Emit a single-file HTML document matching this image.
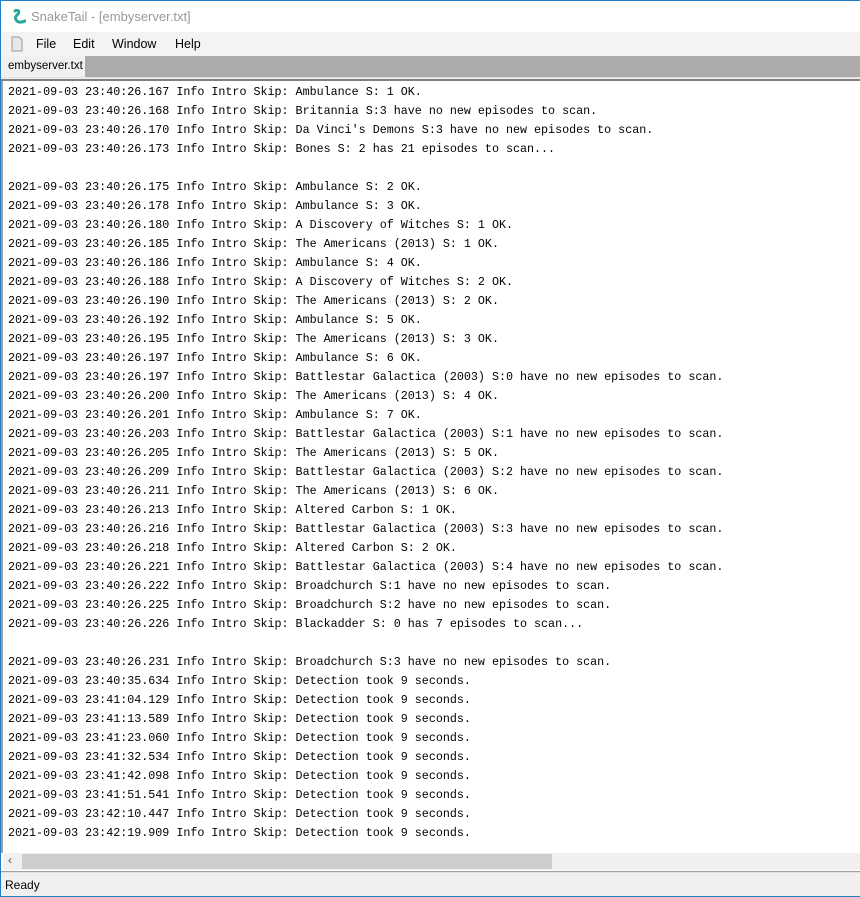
<!DOCTYPE html>
<html><head><style>
*{margin:0;padding:0;box-sizing:border-box}
body{width:860px;height:897px;overflow:hidden;background:#fff;font-family:"Liberation Sans",sans-serif;position:relative}
.bl{position:absolute;left:0;top:0;width:1px;height:897px;background:#1e7fc8}
.bt{position:absolute;left:0;top:0;width:860px;height:1px;background:#1e7fc8}
.bb{position:absolute;left:0;bottom:0;width:860px;height:1px;background:#1e7fc8}
.title{position:absolute;top:1px;left:1px;right:0;height:31px;background:#fff;font-size:13px;color:#999}
.title span{position:absolute;left:30px;top:8px}
.menu{position:absolute;top:32px;left:1px;right:0;height:24px;background:#f3f3f3;font-size:12.5px;color:#000}
.menu span{position:absolute;top:5px}
.tabs{position:absolute;top:56px;left:1px;right:0;height:21px;background:#ababab}
.tab{position:absolute;left:0;top:0;width:84px;height:21px;background:#f0f0f0;font-size:11.5px;padding:4px 0 0 7px}
.sep{position:absolute;top:77px;left:1px;right:0;height:4px;background:linear-gradient(#e0e0e0 0 1px,#f0f0f0 1px 2px,#808080 2px 4px)}
.txt{position:absolute;top:81px;left:1px;right:0;height:772px;background:#fff;border-left:2px solid #a0a0a0}
pre{font-family:"Liberation Mono",monospace;font-size:11.7px;line-height:19px;padding:0 0 0 5px;color:#000;margin-top:0;position:relative;top:2px}
.sb{position:absolute;top:853px;left:3px;right:0;height:17px;background:#f0f0f0}
.thumb{position:absolute;left:19px;top:1px;width:530px;height:15px;background:#cdcdcd}
.arr{position:absolute;left:5px;top:0px;font-size:12px;color:#555}
.sep2{position:absolute;top:870px;left:1px;right:0;height:3px;background:linear-gradient(#fff 0 1px,#a0a0a0 1px 2px,#e0e0e0 2px)}
.status{position:absolute;top:873px;left:1px;right:0;height:23px;background:#f0f0f0;font-size:12px;padding:5px 0 0 4px}
</style></head><body>
<div class="title"><svg style="position:absolute;left:11px;top:8px" width="14" height="15" viewBox="0 0 14 15"><path d="M3 2c3-2 5 1 3 3-2 2-4 4-1 7 2 2 6 1 8 0" stroke="#2aa59a" stroke-width="3" fill="none" stroke-linecap="round"/></svg><span>SnakeTail - [embyserver.txt]</span></div>
<div class="menu"><svg style="position:absolute;left:10px;top:4px" width="12" height="16"><path d="M1 1h7l3 3v11H1z" fill="#e8e8e8" stroke="#999"/></svg><span style="left:35px">File</span><span style="left:72px">Edit</span><span style="left:111px">Window</span><span style="left:174px">Help</span></div>
<div class="tabs"><div class="tab">embyserver.txt</div></div>
<div class="sep"></div>
<div class="txt"><pre>2021-09-03 23:40:26.167 Info Intro Skip: Ambulance S: 1 OK.
2021-09-03 23:40:26.168 Info Intro Skip: Britannia S:3 have no new episodes to scan.
2021-09-03 23:40:26.170 Info Intro Skip: Da Vinci's Demons S:3 have no new episodes to scan.
2021-09-03 23:40:26.173 Info Intro Skip: Bones S: 2 has 21 episodes to scan...

2021-09-03 23:40:26.175 Info Intro Skip: Ambulance S: 2 OK.
2021-09-03 23:40:26.178 Info Intro Skip: Ambulance S: 3 OK.
2021-09-03 23:40:26.180 Info Intro Skip: A Discovery of Witches S: 1 OK.
2021-09-03 23:40:26.185 Info Intro Skip: The Americans (2013) S: 1 OK.
2021-09-03 23:40:26.186 Info Intro Skip: Ambulance S: 4 OK.
2021-09-03 23:40:26.188 Info Intro Skip: A Discovery of Witches S: 2 OK.
2021-09-03 23:40:26.190 Info Intro Skip: The Americans (2013) S: 2 OK.
2021-09-03 23:40:26.192 Info Intro Skip: Ambulance S: 5 OK.
2021-09-03 23:40:26.195 Info Intro Skip: The Americans (2013) S: 3 OK.
2021-09-03 23:40:26.197 Info Intro Skip: Ambulance S: 6 OK.
2021-09-03 23:40:26.197 Info Intro Skip: Battlestar Galactica (2003) S:0 have no new episodes to scan.
2021-09-03 23:40:26.200 Info Intro Skip: The Americans (2013) S: 4 OK.
2021-09-03 23:40:26.201 Info Intro Skip: Ambulance S: 7 OK.
2021-09-03 23:40:26.203 Info Intro Skip: Battlestar Galactica (2003) S:1 have no new episodes to scan.
2021-09-03 23:40:26.205 Info Intro Skip: The Americans (2013) S: 5 OK.
2021-09-03 23:40:26.209 Info Intro Skip: Battlestar Galactica (2003) S:2 have no new episodes to scan.
2021-09-03 23:40:26.211 Info Intro Skip: The Americans (2013) S: 6 OK.
2021-09-03 23:40:26.213 Info Intro Skip: Altered Carbon S: 1 OK.
2021-09-03 23:40:26.216 Info Intro Skip: Battlestar Galactica (2003) S:3 have no new episodes to scan.
2021-09-03 23:40:26.218 Info Intro Skip: Altered Carbon S: 2 OK.
2021-09-03 23:40:26.221 Info Intro Skip: Battlestar Galactica (2003) S:4 have no new episodes to scan.
2021-09-03 23:40:26.222 Info Intro Skip: Broadchurch S:1 have no new episodes to scan.
2021-09-03 23:40:26.225 Info Intro Skip: Broadchurch S:2 have no new episodes to scan.
2021-09-03 23:40:26.226 Info Intro Skip: Blackadder S: 0 has 7 episodes to scan...

2021-09-03 23:40:26.231 Info Intro Skip: Broadchurch S:3 have no new episodes to scan.
2021-09-03 23:40:35.634 Info Intro Skip: Detection took 9 seconds.
2021-09-03 23:41:04.129 Info Intro Skip: Detection took 9 seconds.
2021-09-03 23:41:13.589 Info Intro Skip: Detection took 9 seconds.
2021-09-03 23:41:23.060 Info Intro Skip: Detection took 9 seconds.
2021-09-03 23:41:32.534 Info Intro Skip: Detection took 9 seconds.
2021-09-03 23:41:42.098 Info Intro Skip: Detection took 9 seconds.
2021-09-03 23:41:51.541 Info Intro Skip: Detection took 9 seconds.
2021-09-03 23:42:10.447 Info Intro Skip: Detection took 9 seconds.
2021-09-03 23:42:19.909 Info Intro Skip: Detection took 9 seconds.</pre></div>
<div class="sb"><span class="arr">&#8249;</span><div class="thumb"></div></div>
<div class="sep2"></div>
<div class="status">Ready</div>
<div class="bl"></div><div class="bt"></div><div class="bb"></div>
</body></html>
